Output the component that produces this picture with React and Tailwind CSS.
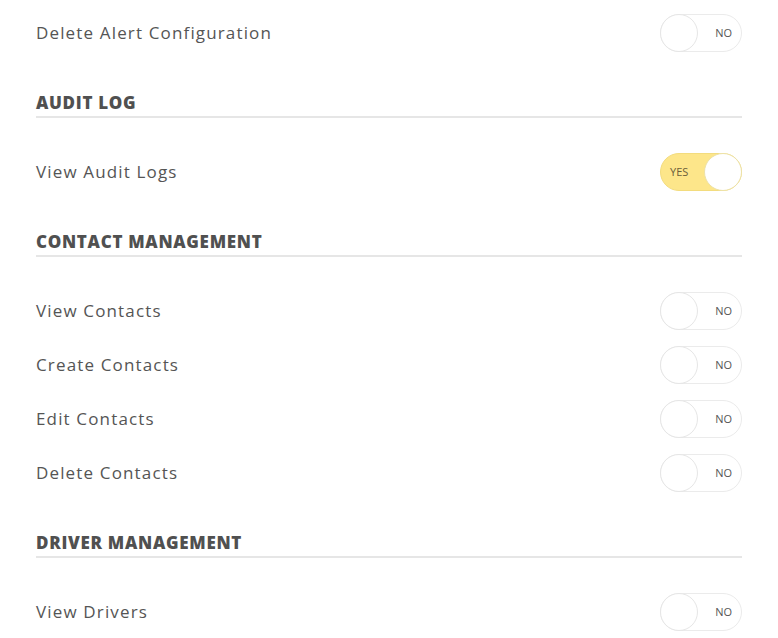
import React from "react";

function Toggle({ on }) {
  if (on) {
    return (
      <div className="relative flex h-[38px] w-[82px] shrink-0 items-center rounded-full border border-[#f3dc7e] bg-[#fde68a]">
        <span className="pl-[9px] text-[11px] text-[#6b5e3a]">YES</span>
        <div className="absolute right-[-1px] top-[-1px] h-[38px] w-[38px] rounded-full border border-[#ede2a8] bg-white" />
      </div>
    );
  }
  return (
    <div className="relative flex h-[38px] w-[82px] shrink-0 items-center justify-end rounded-full border border-[#ebebeb] bg-white">
      <span className="pr-[9px] text-[11px] text-[#555]">NO</span>
      <div className="absolute left-[-1px] top-[-1px] h-[38px] w-[38px] rounded-full border border-[#e6e6e6] bg-white" />
    </div>
  );
}

function Row({ label, on }) {
  return (
    <div className="flex h-[54px] items-center justify-between">
      <span className="text-[17px] text-[#555] tracking-[1.15px]">{label}</span>
      <Toggle on={on} />
    </div>
  );
}

function Heading({ children }) {
  return (
    <div className="mt-[31px] mb-[27px] border-b-2 border-[#e6e6e6] pb-[1px]">
      <h2 className="text-[17px] font-extrabold text-[#505050] leading-[24px] tracking-[0.7px]">{children}</h2>
    </div>
  );
}

export default function App() {
  return (
    <div
      className="min-h-[638px] bg-white px-[36px] pt-[6px]"
      style={{ fontFamily: '"Open Sans", "Liberation Sans", sans-serif' }}
    >
      <div className="w-[706px]">
        <Row label="Delete Alert Configuration" on={false} />
        <Heading>AUDIT LOG</Heading>
        <Row label="View Audit Logs" on />
        <Heading>CONTACT MANAGEMENT</Heading>
        <Row label="View Contacts" />
        <Row label="Create Contacts" />
        <Row label="Edit Contacts" />
        <Row label="Delete Contacts" />
        <Heading>DRIVER MANAGEMENT</Heading>
        <Row label="View Drivers" />
      </div>
    </div>
  );
}
